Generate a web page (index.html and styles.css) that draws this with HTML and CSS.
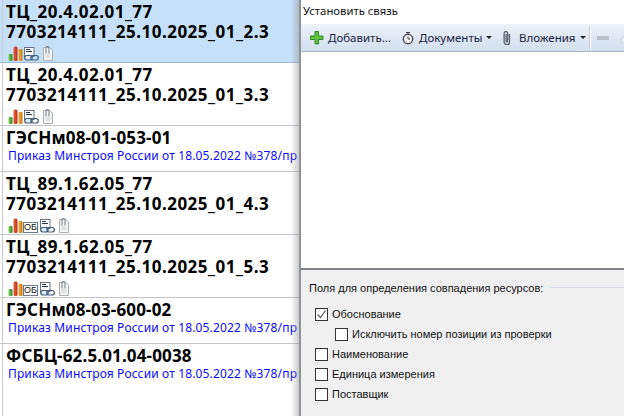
FILE: index.html
```html
<!DOCTYPE html>
<html lang="ru">
<head>
<meta charset="utf-8">
<title>Установить связь</title>
<link rel="stylesheet" href="styles.css">
</head>
<body>
<svg class="defs" width="0" height="0" aria-hidden="true">
  <defs>
    <linearGradient id="gG" x1="0" x2="1" y1="0" y2="0"><stop offset="0" stop-color="#7fd05a"/><stop offset="1" stop-color="#2a8a2a"/></linearGradient>
    <linearGradient id="gR" x1="0" x2="1" y1="0" y2="0"><stop offset="0" stop-color="#f0603a"/><stop offset="1" stop-color="#b8301a"/></linearGradient>
    <linearGradient id="gO" x1="0" x2="1" y1="0" y2="0"><stop offset="0" stop-color="#f5b040"/><stop offset="1" stop-color="#c87810"/></linearGradient>
    <symbol id="bars" viewBox="0 0 15 15">
      <rect x="0.500" y="8" width="4" height="7" rx="1" fill="url(#gG)"/>
      <rect x="5.500" y="0.500" width="4" height="14.500" rx="1.500" fill="url(#gR)"/>
      <rect x="10.500" y="3" width="4" height="12" rx="1" fill="url(#gO)"/>
    </symbol>
    <symbol id="link" viewBox="0 0 15 15">
      <rect x="0.500" y="1.500" width="9.500" height="9" fill="#fff" stroke="#66727e"/>
      <path d="M2 3.500h4M2 5.500h6" stroke="#26344a"/>
      <rect x="0.700" y="9.500" width="7.500" height="4.500" rx="2.200" fill="#e4ecf3" stroke="#3a5a7a" stroke-width="1.200"/>
      <rect x="6.800" y="9.500" width="7.500" height="4.500" rx="2.200" fill="none" stroke="#3a5a7a" stroke-width="1.200"/>
    </symbol>
    <symbol id="clip" viewBox="0 0 10 15">
      <path d="M0.500 1.500h6.500l2.500 2.500v10.500h-9z" fill="#f6f6f2" stroke="#a8aeb4"/>
      <path d="M2.500 9h5M2.500 11h5" stroke="#c8ccd0"/>
      <path d="M3 7.500V2a1.500 1.500 0 0 1 3 0v5.500" fill="none" stroke="#7a8794" stroke-width="1.100"/>
    </symbol>
  </defs>
</svg>
<main class="app">
  <section class="list">
    <article class="row row-tall is-selected">
      <h2 class="code">ТЦ_20.4.02.01_77<br>7703214111_25.10.2025_01_2.3</h2>
      <div class="icons"><svg class="i-bars"><use href="#bars"/></svg><svg class="i-link"><use href="#link"/></svg><svg class="i-clip"><use href="#clip"/></svg></div>
    </article>
    <article class="row row-tall">
      <h2 class="code">ТЦ_20.4.02.01_77<br>7703214111_25.10.2025_01_3.3</h2>
      <div class="icons"><svg class="i-bars"><use href="#bars"/></svg><svg class="i-link"><use href="#link"/></svg><svg class="i-clip"><use href="#clip"/></svg></div>
    </article>
    <article class="row row-short">
      <h2 class="code code-tight">ГЭСНм08-01-053-01</h2>
      <p class="order">Приказ Минстроя России от 18.05.2022 №378/пр</p>
    </article>
    <article class="row row-tall">
      <h2 class="code">ТЦ_89.1.62.05_77<br>7703214111_25.10.2025_01_4.3</h2>
      <div class="icons"><svg class="i-bars"><use href="#bars"/></svg><span class="ob">ОБ</span><svg class="i-link"><use href="#link"/></svg><svg class="i-clip"><use href="#clip"/></svg></div>
    </article>
    <article class="row row-tall">
      <h2 class="code">ТЦ_89.1.62.05_77<br>7703214111_25.10.2025_01_5.3</h2>
      <div class="icons"><svg class="i-bars"><use href="#bars"/></svg><span class="ob">ОБ</span><svg class="i-link"><use href="#link"/></svg><svg class="i-clip"><use href="#clip"/></svg></div>
    </article>
    <article class="row row-short">
      <h2 class="code code-tight">ГЭСНм08-03-600-02</h2>
      <p class="order">Приказ Минстроя России от 18.05.2022 №378/пр</p>
    </article>
    <article class="row row-last">
      <h2 class="code code-tight">ФСБЦ-62.5.01.04-0038</h2>
      <p class="order">Приказ Минстроя России от 18.05.2022 №378/пр</p>
    </article>
  </section>
  <section class="dialog">
    <header class="title">Установить связь</header>
    <nav class="toolbar">
      <span class="tool tool-add"><svg class="t-icon" viewBox="0 0 14 14"><path d="M5 .5h3.500v4.500h4.500v3.500H8.500v4.500H5V8.500H.5V5H5z" fill="#63c23c" stroke="#2f8a2a"/></svg>Добавить...</span>
      <span class="tool tool-docs"><svg class="t-icon" viewBox="0 0 14 14"><circle cx="7" cy="8" r="4.700" fill="#f2f4f6" stroke="#4a4f55" stroke-width="1.500"/><path d="M5 1.500h4M7 2v1.500M7 5.500V8h2" stroke="#3a3f45" fill="none"/></svg>Документы<i class="caret"></i></span>
      <span class="tool tool-att"><svg class="t-icon" viewBox="0 0 14 14"><path d="M8.500 3v8a2.700 2.700 0 0 1-5.400 0V2.500a1.800 1.800 0 0 1 3.600 0V10a.8.8 0 0 1-1.600 0V3" fill="none" stroke="#4f5962" stroke-width="1.200"/></svg>Вложения<i class="caret"></i></span>
      <span class="sep"></span>
      <span class="minus"></span>
      <svg class="erase" viewBox="0 0 12 12"><path d="M1 8l6-6 5 3v7H4z" fill="#e6eaee" stroke="#cfd5da"/></svg>
    </nav>
    <div class="pane"></div>
    <div class="options">
      <div class="legend"><span>Поля для определения совпадения ресурсов:</span><span class="legend-line"></span></div>
      <label class="check"><span class="box"><svg viewBox="0 0 11 11"><path d="M1.500 5.500l3 3 5-7" fill="none" stroke="#555" stroke-width="1.200"/></svg></span>Обоснование</label>
      <label class="check nested"><span class="box"></span>Исключить номер позиции из проверки</label>
      <label class="check"><span class="box"></span>Наименование</label>
      <label class="check"><span class="box"></span>Единица измерения</label>
      <label class="check"><span class="box"></span>Поставщик</label>
    </div>
  </section>
</main>
</body>
</html>
```
FILE: styles.css
```css
* { box-sizing: border-box; }
html, body { margin: 0; height: 100%; overflow: hidden; }
body { background: #fff; font-family: "Noto Sans", "Liberation Sans", sans-serif; }
.defs { position: absolute; }
.app { display: flex; width: 624px; height: 416px; }

.list { width: 299px; flex: none; position: relative; background: #fff; overflow: hidden; }
.list::before { content: ""; position: absolute; top: 0; bottom: 0; left: 2px; width: 1px; background: #c9cdd2; }
.list::after { content: ""; position: absolute; top: 0; right: 0; bottom: 0; width: 8px; background: linear-gradient(to right, rgba(150,150,150,0), rgba(150,150,150,.5)); }
.row { border-bottom: 1px solid #c4c4c4; padding-left: 6px; overflow: hidden; white-space: nowrap; }
.row-tall { height: 63px; }
.row-short { height: 46px; }
.row-last { border-bottom: 0; }
.is-selected { background: #c6e0fa; border-bottom-color: #9db8d0; }
.code { margin: 0; padding-top: 2px; font-size: 17px; line-height: 20px; font-weight: 700; letter-spacing: .5px; color: #000; }
.code-tight { letter-spacing: .15px; }
.icons { display: flex; align-items: flex-end; height: 15px; margin-top: 4px; padding-left: 2px; gap: 1px; }
.i-bars { width: 15px; height: 15px; }
.i-link { width: 15px; height: 15px; }
.i-clip { width: 10px; height: 15px; margin-left: 3px; }
.ob { width: 15px; height: 11px; margin: 0 1px 0 -1px; border: 1px solid #6d7a88; font: 9px/9px "Liberation Sans", sans-serif; text-align: center; color: #111; background: #fff; }
.order { margin: 0; padding-left: 2px; font-size: 12px; line-height: 16px; letter-spacing: .14px; color: #0a0aff; }

.dialog { width: 325px; flex: none; display: flex; flex-direction: column; background: #f0f0f0; border-left: 2px solid #8f9296; }
.title { height: 24px; background: #fff; padding: 3px 0 0 2px; font-size: 11.300px; line-height: 16px; color: #111; }
.toolbar { height: 28px; display: flex; align-items: center; padding-left: 9px; background: linear-gradient(#eef3fa, #dce6f3 60%, #d4e0ef); border-bottom: 1px solid #a9b5c2; font-size: 11.500px; color: #1a2340; white-space: nowrap; overflow: hidden; }
.tool { display: flex; align-items: center; flex: none; }
.tool-add { width: 91px; }
.tool-docs { width: 100px; }
.tool-att { width: 88px; }
.t-icon { width: 14px; height: 14px; margin-right: 4px; flex: none; }
.caret { width: 0; height: 0; margin-left: 4px; border: 3px solid transparent; border-top: 3px solid #222; border-bottom: 0; }
.sep { width: 2px; height: 24px; flex: none; background: #c4ccd6; border-right: 1px solid #fff; margin-right: 6px; }
.minus { width: 12px; height: 4px; flex: none; background: #b9c0c8; margin-right: 10px; }
.erase { width: 12px; height: 12px; flex: none; }
.pane { height: 218px; background: #fff; border-bottom: 2px solid #7f8387; }
.options { flex: 1; padding: 9px 0 0 8px; font-family: "Liberation Sans", sans-serif; font-size: 11px; line-height: 16px; color: #111; }
.legend { display: flex; align-items: center; height: 17px; margin-bottom: 8px; gap: 7px; }
.legend-line { flex: 1; height: 1px; background: #d5dfe9; }
.check { display: flex; align-items: center; height: 20px; margin-left: 6px; }
.nested { margin-left: 26px; }
.box { width: 13px; height: 13px; margin-right: 4px; border: 1px solid #333; background: #fff; flex: none; display: block; }
.box svg { display: block; width: 11px; height: 11px; }
```
